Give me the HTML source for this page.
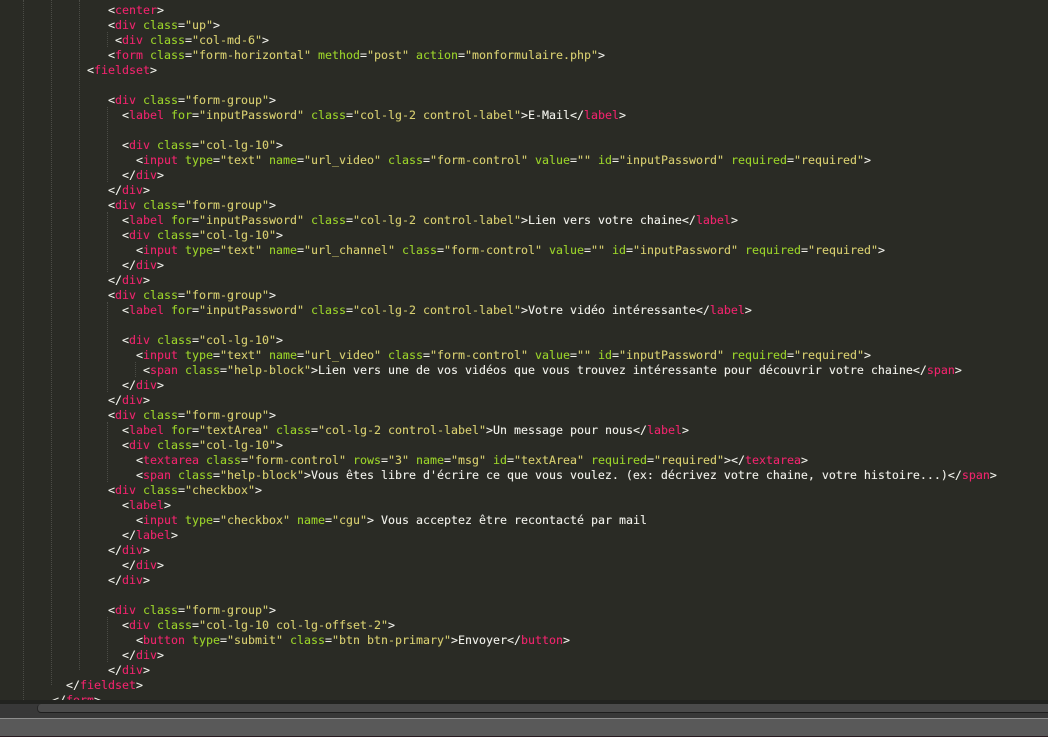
<!DOCTYPE html>
<html lang="fr">
<head>
<meta charset="utf-8">
<title>code</title>
<style>
html,body{margin:0;padding:0;width:1048px;height:737px;overflow:hidden;background:#282923}
#ed{position:absolute;left:0;top:0;width:1048px;height:700px;overflow:hidden;background:#2a2b25}
pre{position:absolute;left:3px;top:3px;margin:0;font:11.63px/15px "DejaVu Sans Mono","Liberation Mono",monospace;color:#f2f2ec;white-space:pre;letter-spacing:0;-webkit-text-stroke:0.1px currentColor}
pre i{font-style:normal;color:#f0246d}
pre b{font-weight:normal;color:#9bd32a}
pre u{text-decoration:none;color:#d8cf70}
.g{position:absolute;width:0;border-left:1px dotted #4b4c46}
#a{position:absolute;left:0;top:700px;width:1048px;height:4px;background:#222320}
#t{position:absolute;left:0;top:704px;width:1048px;height:14px;background:#383838}
#th{position:absolute;left:37px;top:704px;width:1020px;height:8px;background:#4b4b4b;border-radius:4px 0 0 4px;border-bottom:1px solid #1e1e1e;border-left:1px solid #262626}
#s{position:absolute;left:0;top:718px;width:1048px;height:18px;background:#595959;border-top:1px solid #8e8e8e;box-sizing:border-box}
#e{position:absolute;left:0;top:736px;width:1048px;height:1px;background:#2a1c22}
</style>
</head>
<body>
<div id="ed">
<div class="g" style="left:23px;top:0;height:700px"></div>
<div class="g" style="left:51px;top:0;height:685px"></div>
<div class="g" style="left:79px;top:0;height:670px"></div>
<div class="g" style="left:107px;top:32px;height:15px"></div>
<div class="g" style="left:107px;top:107px;height:75px"></div>
<div class="g" style="left:107px;top:212px;height:60px"></div>
<div class="g" style="left:107px;top:302px;height:90px"></div>
<div class="g" style="left:107px;top:422px;height:60px"></div>
<div class="g" style="left:107px;top:617px;height:45px"></div>
<div class="g" style="left:135px;top:362px;height:15px"></div>
<pre>               &lt;<i>center</i>&gt;
               &lt;<i>div</i> <b>class</b>=<u>"up"</u>&gt;
                &lt;<i>div</i> <b>class</b>=<u>"col-md-6"</u>&gt;
               &lt;<i>form</i> <b>class</b>=<u>"form-horizontal"</u> <b>method</b>=<u>"post"</u> <b>action</b>=<u>"monformulaire.php"</u>&gt;
            &lt;<i>fieldset</i>&gt;

               &lt;<i>div</i> <b>class</b>=<u>"form-group"</u>&gt;
                 &lt;<i>label</i> <b>for</b>=<u>"inputPassword"</u> <b>class</b>=<u>"col-lg-2 control-label"</u>&gt;E-Mail&lt;/<i>label</i>&gt;

                 &lt;<i>div</i> <b>class</b>=<u>"col-lg-10"</u>&gt;
                   &lt;<i>input</i> <b>type</b>=<u>"text"</u> <b>name</b>=<u>"url_video"</u> <b>class</b>=<u>"form-control"</u> <b>value</b>=<u>""</u> <b>id</b>=<u>"inputPassword"</u> <b>required</b>=<u>"required"</u>&gt;
                 &lt;/<i>div</i>&gt;
               &lt;/<i>div</i>&gt;
               &lt;<i>div</i> <b>class</b>=<u>"form-group"</u>&gt;
                 &lt;<i>label</i> <b>for</b>=<u>"inputPassword"</u> <b>class</b>=<u>"col-lg-2 control-label"</u>&gt;Lien vers votre chaine&lt;/<i>label</i>&gt;
                 &lt;<i>div</i> <b>class</b>=<u>"col-lg-10"</u>&gt;
                   &lt;<i>input</i> <b>type</b>=<u>"text"</u> <b>name</b>=<u>"url_channel"</u> <b>class</b>=<u>"form-control"</u> <b>value</b>=<u>""</u> <b>id</b>=<u>"inputPassword"</u> <b>required</b>=<u>"required"</u>&gt;
                 &lt;/<i>div</i>&gt;
               &lt;/<i>div</i>&gt;
               &lt;<i>div</i> <b>class</b>=<u>"form-group"</u>&gt;
                 &lt;<i>label</i> <b>for</b>=<u>"inputPassword"</u> <b>class</b>=<u>"col-lg-2 control-label"</u>&gt;Votre vidéo intéressante&lt;/<i>label</i>&gt;

                 &lt;<i>div</i> <b>class</b>=<u>"col-lg-10"</u>&gt;
                   &lt;<i>input</i> <b>type</b>=<u>"text"</u> <b>name</b>=<u>"url_video"</u> <b>class</b>=<u>"form-control"</u> <b>value</b>=<u>""</u> <b>id</b>=<u>"inputPassword"</u> <b>required</b>=<u>"required"</u>&gt;
                    &lt;<i>span</i> <b>class</b>=<u>"help-block"</u>&gt;Lien vers une de vos vidéos que vous trouvez intéressante pour découvrir votre chaine&lt;/<i>span</i>&gt;
                 &lt;/<i>div</i>&gt;
               &lt;/<i>div</i>&gt;
               &lt;<i>div</i> <b>class</b>=<u>"form-group"</u>&gt;
                 &lt;<i>label</i> <b>for</b>=<u>"textArea"</u> <b>class</b>=<u>"col-lg-2 control-label"</u>&gt;Un message pour nous&lt;/<i>label</i>&gt;
                 &lt;<i>div</i> <b>class</b>=<u>"col-lg-10"</u>&gt;
                   &lt;<i>textarea</i> <b>class</b>=<u>"form-control"</u> <b>rows</b>=<u>"3"</u> <b>name</b>=<u>"msg"</u> <b>id</b>=<u>"textArea"</u> <b>required</b>=<u>"required"</u>&gt;&lt;/<i>textarea</i>&gt;
                   &lt;<i>span</i> <b>class</b>=<u>"help-block"</u>&gt;Vous êtes libre d'écrire ce que vous voulez. (ex: décrivez votre chaine, votre histoire...)&lt;/<i>span</i>&gt;
               &lt;<i>div</i> <b>class</b>=<u>"checkbox"</u>&gt;
                 &lt;<i>label</i>&gt;
                   &lt;<i>input</i> <b>type</b>=<u>"checkbox"</u> <b>name</b>=<u>"cgu"</u>&gt; Vous acceptez être recontacté par mail
                 &lt;/<i>label</i>&gt;
               &lt;/<i>div</i>&gt;
                 &lt;/<i>div</i>&gt;
               &lt;/<i>div</i>&gt;

               &lt;<i>div</i> <b>class</b>=<u>"form-group"</u>&gt;
                 &lt;<i>div</i> <b>class</b>=<u>"col-lg-10 col-lg-offset-2"</u>&gt;
                   &lt;<i>button</i> <b>type</b>=<u>"submit"</u> <b>class</b>=<u>"btn btn-primary"</u>&gt;Envoyer&lt;/<i>button</i>&gt;
                 &lt;/<i>div</i>&gt;
               &lt;/<i>div</i>&gt;
         &lt;/<i>fieldset</i>&gt;
       &lt;/<i>form</i>&gt;</pre>
</div>
<div id="a"></div>
<div id="t"></div>
<div id="th"></div>
<div id="s"></div>
<div id="e"></div>
</body>
</html>
